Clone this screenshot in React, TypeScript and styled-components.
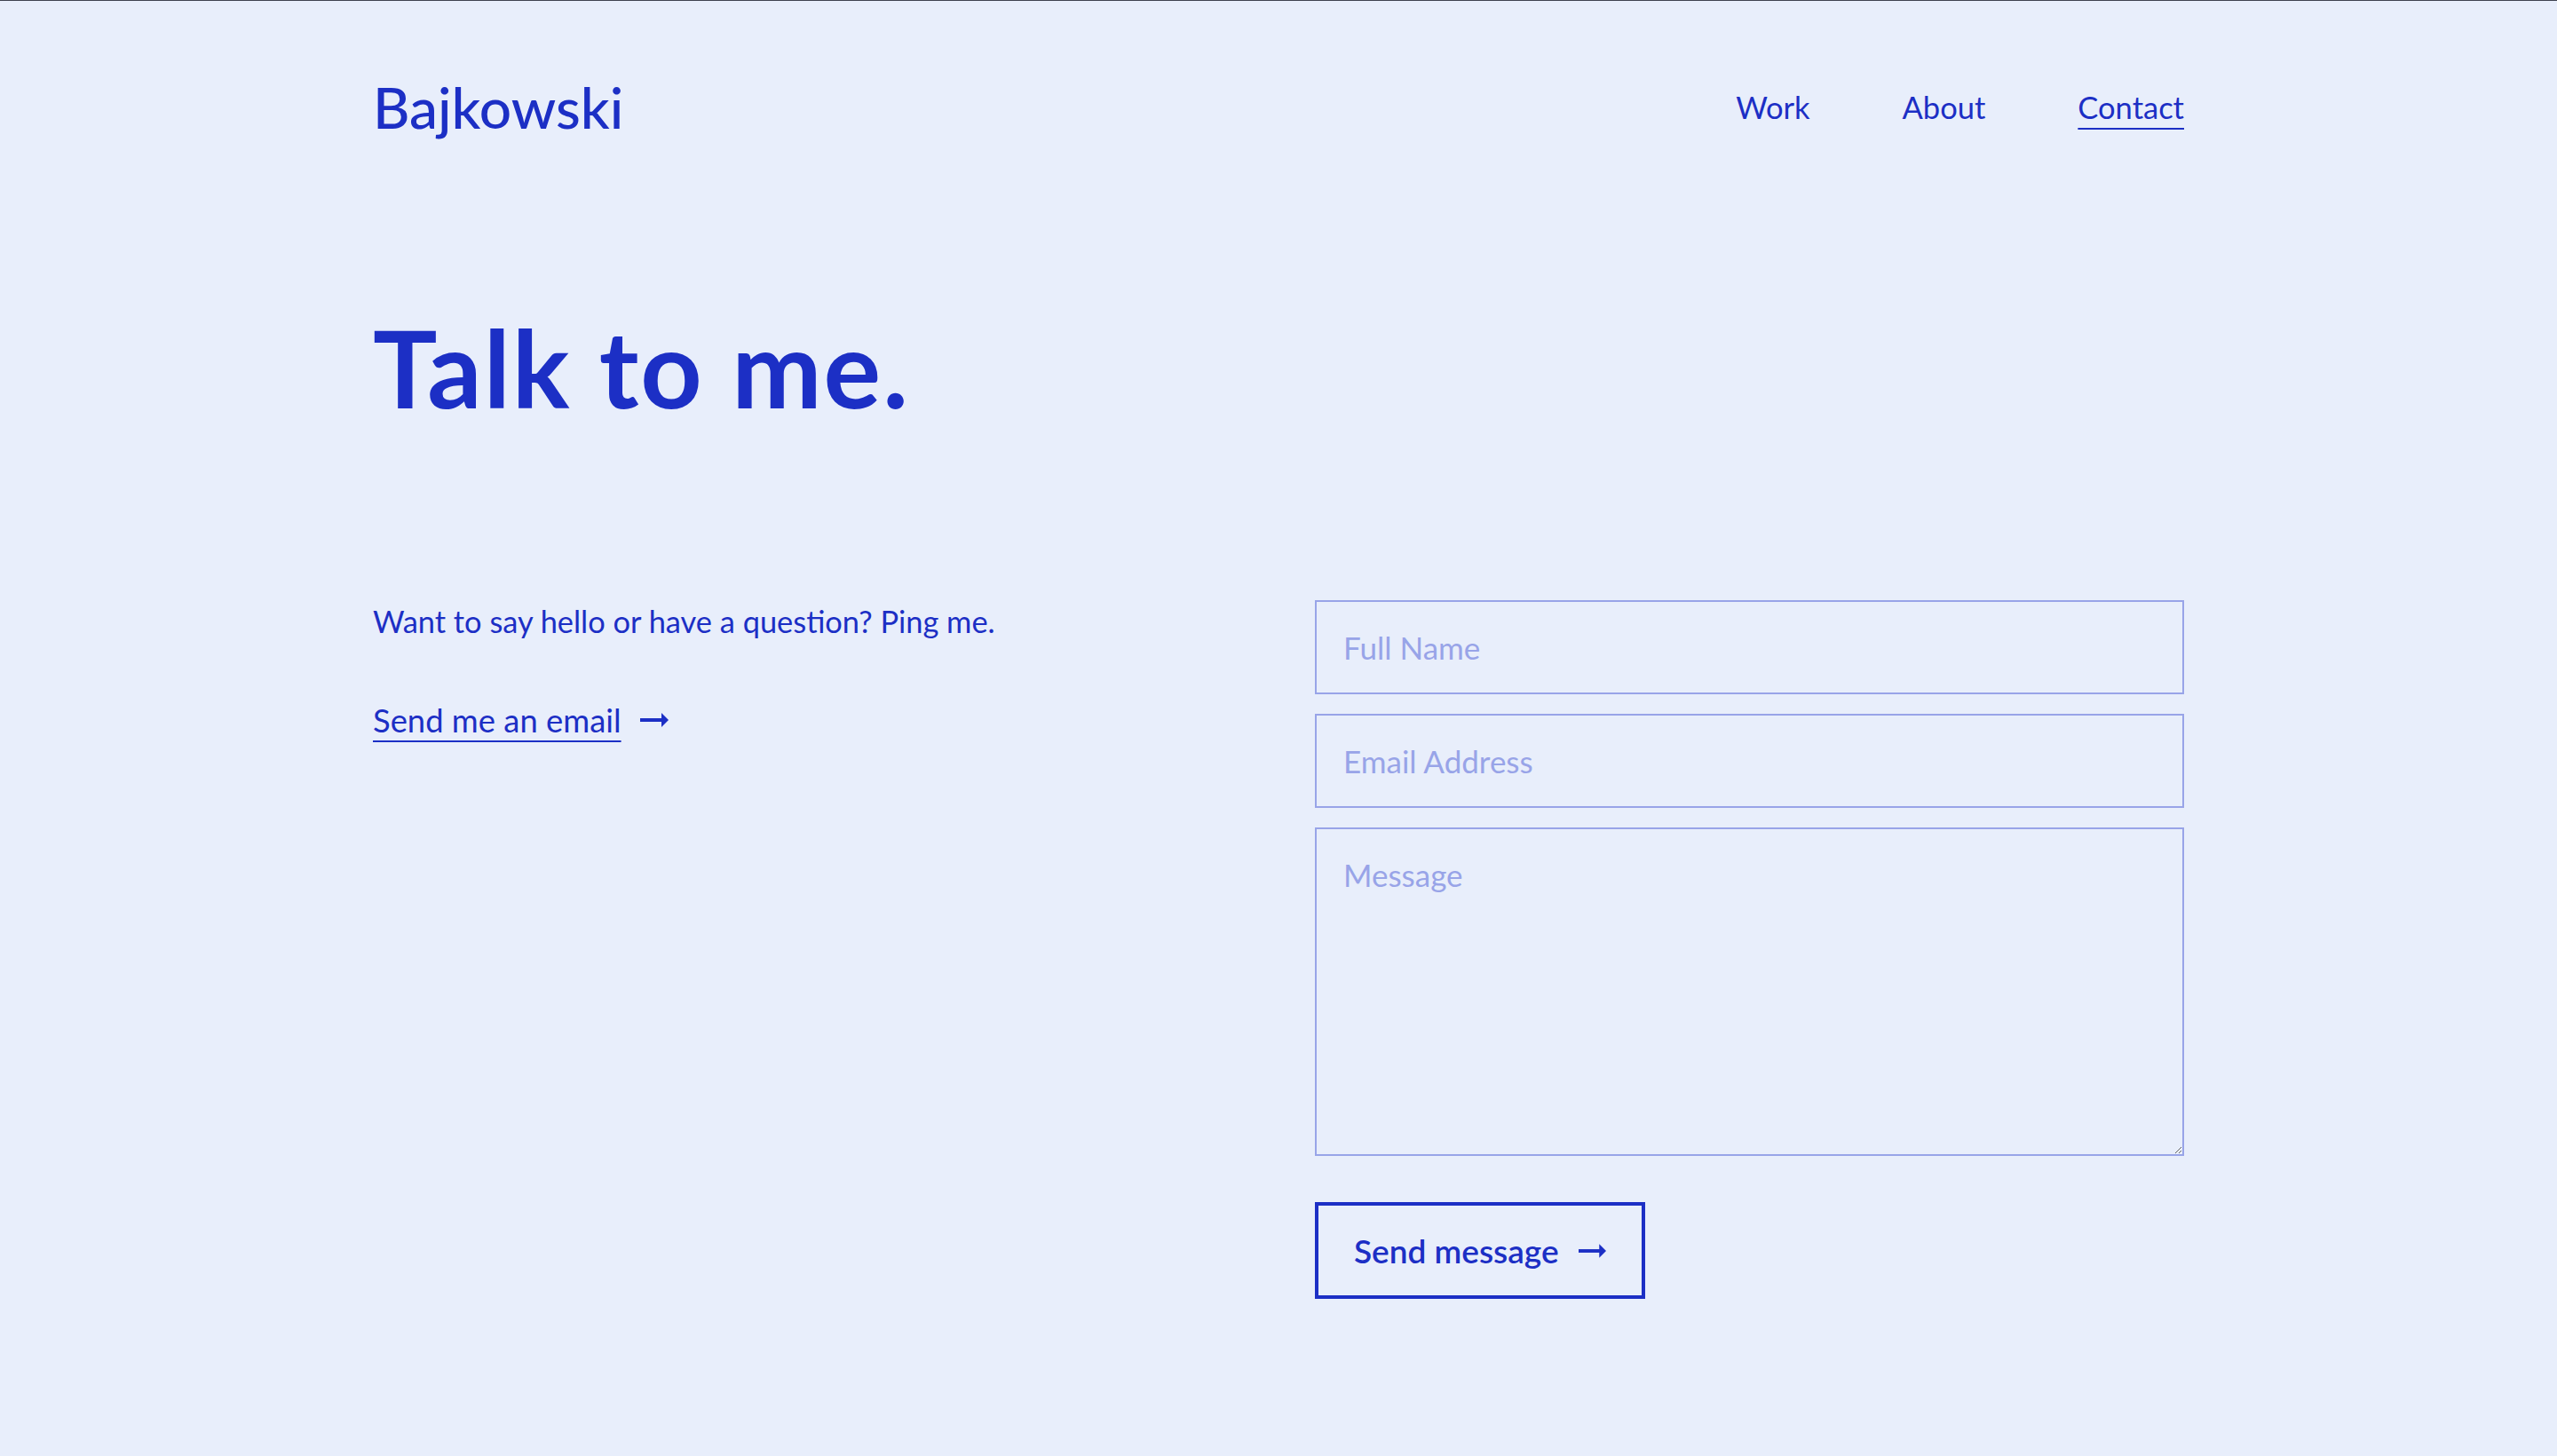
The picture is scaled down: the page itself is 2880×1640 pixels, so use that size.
import React from 'react'
import styled, { createGlobalStyle } from 'styled-components'

const BLUE = '#1c2fc5'
const SOFT = '#98a4e8'

const GlobalStyle = createGlobalStyle`
  html, body {
    margin: 0;
    padding: 0;
  }
  body {
    background: #e8eefb;
    font-family: Lato, 'Open Sans', sans-serif;
    color: ${BLUE};
  }
  * {
    box-sizing: border-box;
  }
`

const Arrow = ({ width = 32 }: { width?: number }) => (
  <svg width={width} height={16} viewBox="0 0 32 16" fill={BLUE} aria-hidden>
    <rect x="0" y="6" width="25" height="4" />
    <polygon points="24,0 32,8 24,16" />
  </svg>
)

const App = () => {
  return (
    <Page>
      <GlobalStyle />
      <Wrap>
        <Header>
          <Logo>Bajkowski</Logo>
          <Nav>
            <NavLink href="#work">Work</NavLink>
            <NavLink href="#about">About</NavLink>
            <NavLink href="#contact" $active>
              Contact
            </NavLink>
          </Nav>
        </Header>

        <Title>Talk to me.</Title>

        <Content>
          <Intro>
            <Lead>Want to say hello or have a question? Ping me.</Lead>
            <MailLink href="#mail">
              <MailText>Send me an email</MailText>
              <Arrow />
            </MailLink>
          </Intro>

          <Form onSubmit={(e) => e.preventDefault()}>
            <Field type="text" placeholder="Full Name" />
            <Field type="email" placeholder="Email Address" />
            <Message placeholder="Message" />
            <SendButton type="submit">
              Send message
              <Arrow width={31} />
            </SendButton>
          </Form>
        </Content>
      </Wrap>
    </Page>
  )
}

export default App

const Page = styled.div`
  min-height: 100vh;
  border-top: 1px solid #3f4350;
`

const Wrap = styled.main`
  max-width: 2040px;
  margin: 0 auto;
  padding-top: 88px;
`

const Header = styled.header`
  display: flex;
  justify-content: space-between;
  align-items: center;
`

const Logo = styled.div`
  font-size: 64px;
  font-weight: 500;
  line-height: 1;
`

const Nav = styled.nav`
  display: flex;
  gap: 104px;
`

const NavLink = styled.a<{ $active?: boolean }>`
  font-size: 34.5px;
  line-height: 1;
  color: ${BLUE};
  text-decoration: ${(p) => (p.$active ? 'underline' : 'none')};
  text-decoration-thickness: 2px;
  text-underline-offset: 10px;
`

const Title = styled.h1`
  margin: 200px 0 0;
  font-size: 121px;
  font-weight: 700;
  line-height: 1;
  letter-spacing: 2px;
`

const Content = styled.section`
  display: grid;
  grid-template-columns: 1fr 979px;
  margin-top: 202px;
`

const Intro = styled.div`
  display: flex;
  flex-direction: column;
  align-items: flex-start;
`

const Lead = styled.p`
  margin: 0;
  font-size: 34.4px;
  line-height: 48px;
`

const MailLink = styled.a`
  display: inline-flex;
  align-items: center;
  gap: 21px;
  margin-top: 63px;
  font-size: 36.4px;
  line-height: 48px;
  color: ${BLUE};
  text-decoration: none;
`

const MailText = styled.span`
  text-decoration: underline;
  text-decoration-thickness: 2px;
  text-underline-offset: 9px;
`

const Form = styled.form`
  display: flex;
  flex-direction: column;
  gap: 22px;
`

const Field = styled.input`
  height: 106px;
  width: 100%;
  padding: 0 30px;
  border: 2px solid ${SOFT};
  border-radius: 0;
  background: transparent;
  font-family: inherit;
  font-size: 35px;
  color: ${BLUE};
  outline: none;

  &::placeholder {
    color: ${SOFT};
    opacity: 1;
  }
`

const Message = styled.textarea`
  height: 370px;
  width: 100%;
  padding: 30px 30px;
  border: 2px solid ${SOFT};
  border-radius: 0;
  background: transparent;
  font-family: inherit;
  font-size: 35px;
  line-height: 1.2;
  color: ${BLUE};
  outline: none;
  resize: vertical;

  &::placeholder {
    color: ${SOFT};
    opacity: 1;
  }
`

const SendButton = styled.button`
  align-self: flex-start;
  display: inline-flex;
  align-items: center;
  gap: 22px;
  height: 109px;
  margin-top: 30px;
  padding: 0 40px;
  border: 4px solid ${BLUE};
  background: transparent;
  font-family: inherit;
  font-size: 37px;
  font-weight: 600;
  color: ${BLUE};
  cursor: pointer;
`
